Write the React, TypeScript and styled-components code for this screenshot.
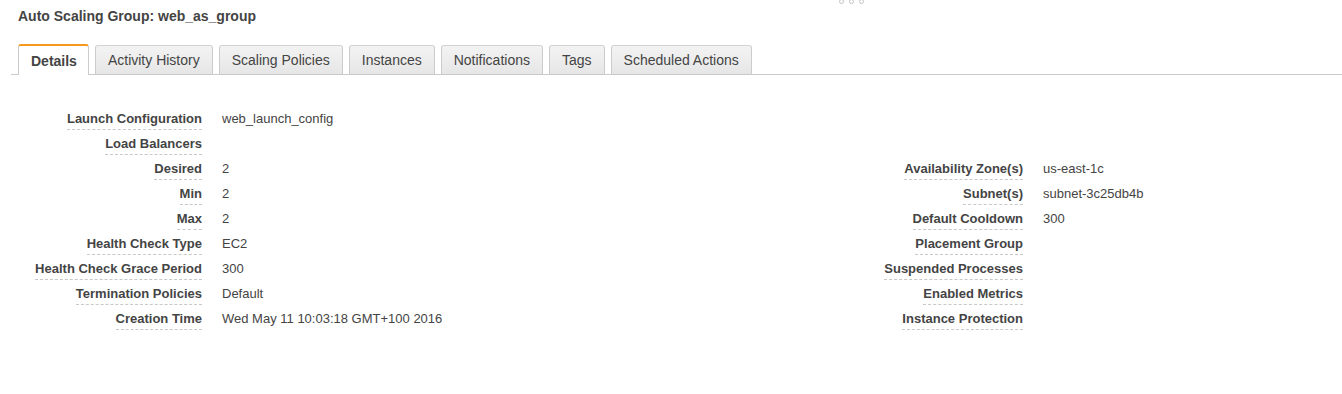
import React from 'react';
import styled, { createGlobalStyle } from 'styled-components';

const GlobalStyle = createGlobalStyle`
  body {
    margin: 0;
    background: #fff;
    font-family: "Liberation Sans", Arial, Helvetica, sans-serif;
    color: #444;
  }
`;

type Field = { label: string; value?: string };

const leftFields: Field[] = [
  { label: 'Launch Configuration', value: 'web_launch_config' },
  { label: 'Load Balancers' },
  { label: 'Desired', value: '2' },
  { label: 'Min', value: '2' },
  { label: 'Max', value: '2' },
  { label: 'Health Check Type', value: 'EC2' },
  { label: 'Health Check Grace Period', value: '300' },
  { label: 'Termination Policies', value: 'Default' },
  { label: 'Creation Time', value: 'Wed May 11 10:03:18 GMT+100 2016' },
];

const rightFields: Field[] = [
  { label: 'Availability Zone(s)', value: 'us-east-1c' },
  { label: 'Subnet(s)', value: 'subnet-3c25db4b' },
  { label: 'Default Cooldown', value: '300' },
  { label: 'Placement Group' },
  { label: 'Suspended Processes' },
  { label: 'Enabled Metrics' },
  { label: 'Instance Protection' },
];

const tabs = [
  'Details',
  'Activity History',
  'Scaling Policies',
  'Instances',
  'Notifications',
  'Tags',
  'Scheduled Actions',
];

const Page = styled.div`
  position: relative;
  padding-top: 8px;
  min-height: 394px;
  box-sizing: border-box;
`;

// drag handle dots at the top of the split pane
const Handle = styled.div`
  position: absolute;
  top: -1px;
  left: 839px;
  display: flex;
  gap: 5px;
`;

const Dot = styled.span`
  width: 3px;
  height: 3px;
  border: 1px solid #c4c4c4;
  border-radius: 50%;
`;

const Title = styled.h2`
  margin: 0;
  padding-left: 18px;
  font-size: 14px;
  line-height: 16px;
  font-weight: bold;
  color: #444;
`;

const TabBar = styled.ul`
  list-style: none;
  margin: 20px 0 0 11px;
  padding: 0 0 0 7px;
  display: flex;
  align-items: flex-end;
  gap: 6px;
  border-bottom: 1px solid #cacaca;
`;

const Tab = styled.li<{ $active?: boolean }>`
  box-sizing: border-box;
  height: ${(p) => (p.$active ? '31px' : '29px')};
  margin-bottom: ${(p) => (p.$active ? '-1px' : '0')};
  padding: ${(p) => (p.$active ? '0 11px 0 12px' : '0 12px')};
  display: flex;
  align-items: center;
  font-size: 14px;
  font-weight: ${(p) => (p.$active ? 'bold' : 'normal')};
  color: #444;
  border: 1px solid #cccccc;
  border-bottom: none;
  border-top: ${(p) => (p.$active ? '2px solid #f7981d' : '1px solid #d2d2d2')};
  border-radius: 3px 3px 0 0;
  background: ${(p) =>
    p.$active ? '#fff' : 'linear-gradient(#f3f3f3, #e6e6e6)'};
  cursor: pointer;
`;

const Details = styled.div`
  margin-top: 35px;
  display: flex;
  align-items: flex-end;
  gap: 20px;
`;

const Table = styled.div<{ $width?: number }>`
  flex: ${(p) => (p.$width ? `0 0 ${p.$width}px` : '1')};
  display: flex;
  flex-direction: column;
`;

const Row = styled.div`
  display: grid;
  grid-template-columns: 202px 1fr;
  column-gap: 20px;
  height: 25px;
  font-size: 13px;
  line-height: 17px;
`;

const LabelCell = styled.div`
  text-align: right;
`;

const Label = styled.span`
  display: inline-block;
  font-weight: bold;
  color: #444;
  padding-bottom: 2px;
  border-bottom: 1px dashed #c8c8c8;
`;

const Value = styled.div`
  color: #444;
`;

const FieldTable = ({ fields, width }: { fields: Field[]; width?: number }) => (
  <Table $width={width}>
    {fields.map((f) => (
      <Row key={f.label}>
        <LabelCell>
          <Label>{f.label}</Label>
        </LabelCell>
        <Value>{f.value}</Value>
      </Row>
    ))}
  </Table>
);

export default function App() {
  return (
    <Page>
      <GlobalStyle />
      <Handle>
        <Dot />
        <Dot />
        <Dot />
      </Handle>
      <Title>Auto Scaling Group: web_as_group</Title>
      <TabBar>
        {tabs.map((t, i) => (
          <Tab key={t} $active={i === 0}>
            {t}
          </Tab>
        ))}
      </TabBar>
      <Details>
        <FieldTable fields={leftFields} width={801} />
        <FieldTable fields={rightFields} />
      </Details>
    </Page>
  );
}
